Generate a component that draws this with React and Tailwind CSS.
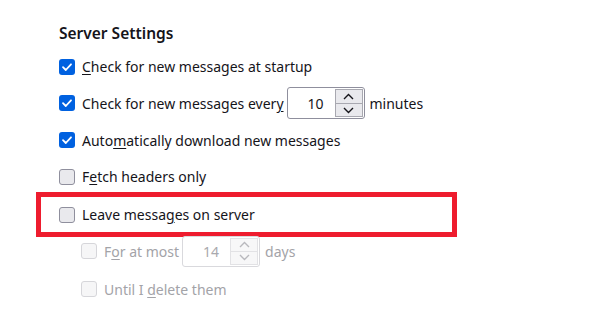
const font = { fontFamily: '"Segoe UI", "Noto Sans", "Open Sans", sans-serif' }

function Check({ checked, disabled }) {
    if (checked) {
        return (
            <span className="w-4 h-4 shrink-0 rounded-[3px] bg-[#0061e0] flex items-center justify-center">
                <svg width="12" height="12" viewBox="0 0 12 12" fill="none">
                    <path d="M2 6.2 L4.8 9 L10 3.3" stroke="white" strokeWidth="1.8" strokeLinecap="round" strokeLinejoin="round" />
                </svg>
            </span>
        )
    }
    return (
        <span
            className={
                disabled
                    ? "w-4 h-4 shrink-0 rounded-[3px] border border-[#d6d6da] bg-[#f6f6f7]"
                    : "w-4 h-4 shrink-0 rounded-[3px] border border-[#8f8f9d] bg-[#e9e9ed]"
            }
        />
    )
}

function Spinner({ value, disabled }) {
    return (
        <div
            className={
                disabled
                    ? "flex h-[31px] w-[78px] rounded-[3px] border border-[#d9d9dd] bg-white"
                    : "flex h-[32px] w-[78px] rounded-[3px] border border-[#8f8f9d] bg-white"
            }
        >
            <div className={disabled ? "flex-1 flex items-center justify-end pr-[10px] text-[#a9a9ae]" : "flex-1 flex items-center justify-end pr-[10px]"}>
                {value}
            </div>
            <div className={disabled ? "w-[28px] flex flex-col m-[1px] border border-[#e2e2e5]" : "w-[28px] flex flex-col m-[1px] border border-[#a8a8b0]"}>
                <div className={disabled ? "flex-1 flex items-center justify-center bg-[#f7f7f8] border-b border-[#e2e2e5]" : "flex-1 flex items-center justify-center bg-[#e9e9ed] border-b border-[#a8a8b0]"}>
                    <svg width="11" height="7" viewBox="0 0 11 7" fill="none">
                        <path d="M1 6 L5.5 1.5 L10 6" stroke={disabled ? "#b8b8bd" : "#15141a"} strokeWidth="1.4" />
                    </svg>
                </div>
                <div className={disabled ? "flex-1 flex items-center justify-center bg-[#f7f7f8]" : "flex-1 flex items-center justify-center bg-[#e9e9ed]"}>
                    <svg width="11" height="7" viewBox="0 0 11 7" fill="none">
                        <path d="M1 1 L5.5 5.5 L10 1" stroke={disabled ? "#b8b8bd" : "#15141a"} strokeWidth="1.4" />
                    </svg>
                </div>
            </div>
        </div>
    )
}

export default function App() {
    return (
        <div className="w-[610px] h-[321px] bg-white text-[#15141a] text-[14px] overflow-hidden" style={font}>
            <div className="pl-[59px] pt-[21px]">
                <h2 className="text-[15.5px] font-semibold leading-[24px] mb-[3.5px]">Server Settings</h2>

                <div className="flex flex-col">
                    <label className="h-[36.67px] flex items-center gap-[7px]">
                        <Check checked />
                        <span><u className="underline-offset-2">C</u>heck for new messages at startup</span>
                    </label>
                    <label className="h-[36.67px] flex items-center gap-[7px]">
                        <Check checked />
                        <span className="mr-[-4px]">Check for new messages ever<u className="underline-offset-2">y</u></span>
                        <Spinner value="10" />
                        <span className="ml-[-2px]">minutes</span>
                    </label>
                    <label className="h-[36.67px] flex items-center gap-[7px]">
                        <Check checked />
                        <span>Auto<u className="underline-offset-2">m</u>atically download new messages</span>
                    </label>
                    <label className="h-[36.67px] flex items-center gap-[7px]">
                        <Check />
                        <span>F<u className="underline-offset-2">e</u>tch headers only</span>
                    </label>

                    <div className="ml-[-23px] mr-[153px] mt-[-3px] h-[45px] border-[5px] border-[#ee1c2e] flex items-center pl-[18px] gap-[7px]">
                        <Check />
                        <span>Leave messa<u className="underline-offset-2">g</u>es on server</span>
                    </div>

                    <div className="pl-[22px] text-[#a3a3a8]">
                        <label className="h-[28px] flex items-center gap-[7px]">
                            <Check disabled />
                            <span className="mr-[-4px]">F<u className="underline-offset-2">o</u>r at most</span>
                            <Spinner value="14" disabled />
                            <span className="ml-[-2px]">days</span>
                        </label>
                        <label className="h-[48px] flex items-center gap-[7px]">
                            <Check disabled />
                            <span>Until I <u className="underline-offset-2">d</u>elete them</span>
                        </label>
                    </div>
                </div>
            </div>
        </div>
    )
}
